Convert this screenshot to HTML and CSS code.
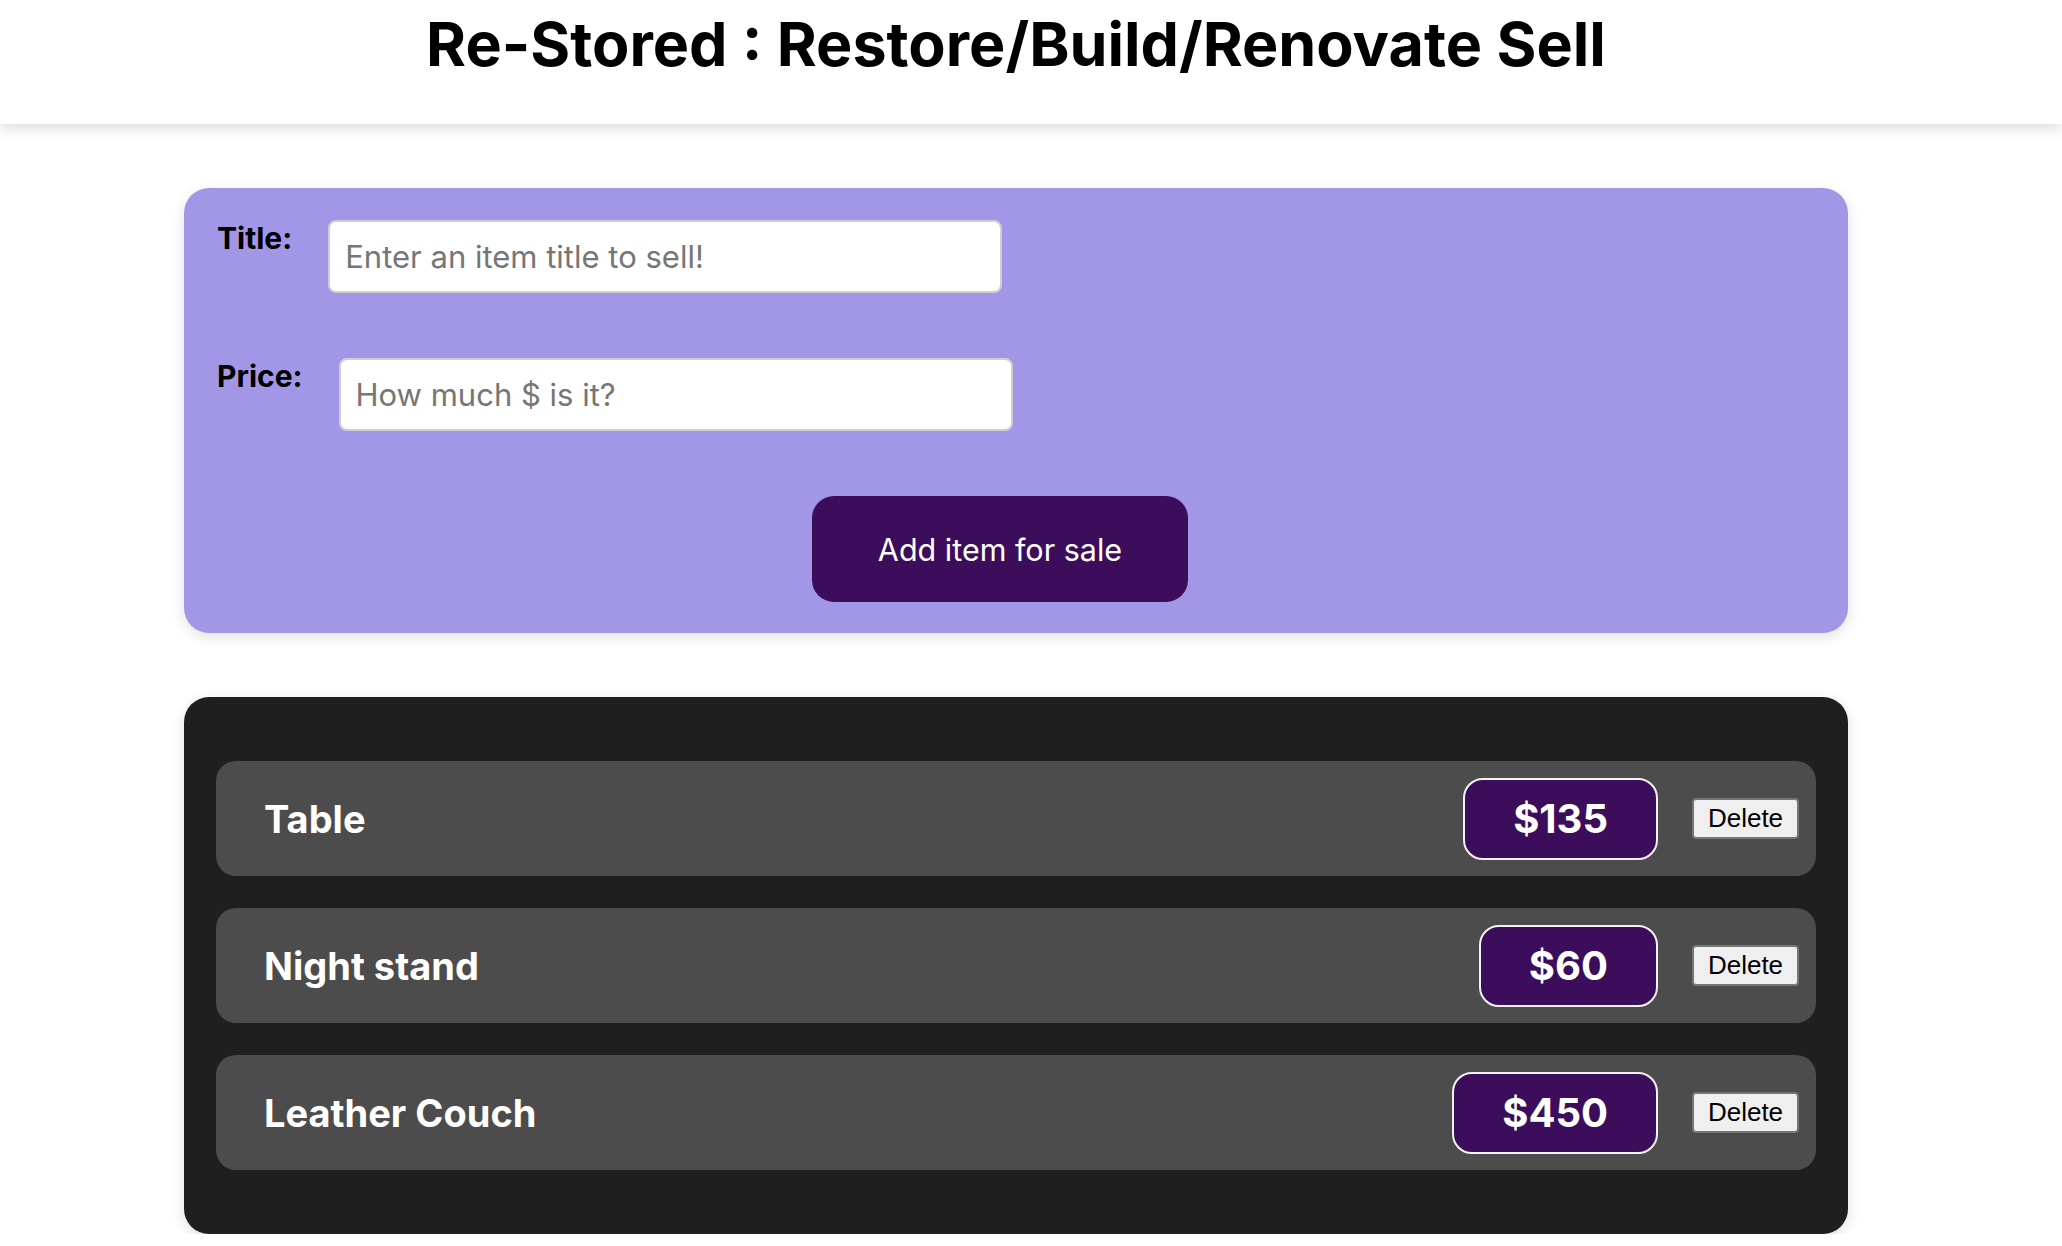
FILE: index.html
```html
<!DOCTYPE html>
<html lang="en">
<head>
<meta charset="utf-8">
<title>Re-Stored</title>
<link rel="stylesheet" href="styles.css">
</head>
<body>
<header class="site-header">
  <h1 class="site-title">Re-Stored : Restore/Build/Renovate Sell</h1>
</header>
<main class="page">
  <form class="sell-form">
    <div class="form-row">
      <label class="form-label" for="title">Title:</label>
      <input class="form-input" id="title" type="text" placeholder="Enter an item title to sell!">
    </div>
    <div class="form-row">
      <label class="form-label" for="price">Price:</label>
      <input class="form-input" id="price" type="text" placeholder="How much $ is it?">
    </div>
    <button class="add-btn" type="button">Add item for sale</button>
  </form>

  <section class="item-list">
    <div class="item-row">
      <span class="item-name">Table</span>
      <span class="item-price">$135</span>
      <button class="delete-btn" type="button">Delete</button>
    </div>
    <div class="item-row">
      <span class="item-name">Night stand</span>
      <span class="item-price">$60</span>
      <button class="delete-btn" type="button">Delete</button>
    </div>
    <div class="item-row">
      <span class="item-name">Leather Couch</span>
      <span class="item-price">$450</span>
      <button class="delete-btn" type="button">Delete</button>
    </div>
  </section>
</main>
</body>
</html>
```

FILE: styles.css
```css
* { box-sizing: border-box; }

html, body {
  margin: 0;
  padding: 0;
  background: #ffffff;
  font-family: Inter, "Noto Sans", "Liberation Sans", sans-serif;
}

.site-header {
  height: 124px;
  padding: 8px 30px 0 0;
  background: #ffffff;
  box-shadow: 0 5px 12px rgba(0, 0, 0, 0.13);
  position: relative;
  z-index: 1;
}

.site-title {
  margin: 0;
  text-align: center;
  font-size: 61px;
  font-weight: 700;
  line-height: 1.21;
  color: #000;
}

.page {
  width: 1664px;
  margin-left: 184px;
  padding-top: 64px;
  display: flex;
  flex-direction: column;
  gap: 64px;
}

.sell-form {
  background: #a297e6;
  border-radius: 25px;
  padding: 32px 35px 31px 33px;
  box-shadow: 0 4px 14px rgba(0, 0, 0, 0.12);
  display: flex;
  flex-direction: column;
  gap: 65px;
}

.form-row {
  display: flex;
  align-items: flex-start;
}

.form-label {
  font-size: 30px;
  font-weight: 700;
  line-height: 1.21;
  color: #000;
  margin-right: 36px;
}

.form-input {
  width: 674px;
  height: 73px;
  border: 2px solid #cfcfcf;
  border-radius: 8px;
  padding: 0 15px;
  font-family: Inter, "Noto Sans", sans-serif;
  font-size: 31px;
  color: #000;
  background: #fff;
  outline: none;
}

.form-input::placeholder {
  color: #767676;
}

.add-btn {
  align-self: flex-start;
  margin-left: 595px;
  width: 376px;
  height: 106px;
  border: none;
  border-radius: 22px;
  background: #3c0d5a;
  color: #fff;
  font-family: Inter, "Noto Sans", sans-serif;
  font-size: 30.5px;
  font-weight: 400;
}

.item-list {
  background: #1f1f1f;
  border-radius: 25px;
  padding: 64px 32px;
  box-shadow: 0 4px 14px rgba(0, 0, 0, 0.12);
  display: flex;
  flex-direction: column;
  gap: 32px;
}

.item-row {
  height: 115px;
  background: #4c4c4c;
  border-radius: 20px;
  padding: 0 17px 0 48px;
  display: flex;
  align-items: center;
}

.item-name {
  flex: 1;
  color: #fff;
  font-size: 38px;
  font-weight: 700;
}

.item-price {
  height: 82px;
  padding: 0 48px;
  display: flex;
  align-items: center;
  background: #3c0d5a;
  border: 2px solid #f2f2f2;
  border-radius: 20px;
  color: #fff;
  font-size: 40px;
  font-weight: 700;
}

.delete-btn {
  margin-left: 34px;
  width: 107px;
  height: 41px;
  padding: 0;
  background: #efefef;
  border: 2px solid #767676;
  border-radius: 4px;
  font-family: "Liberation Sans", Arial, sans-serif;
  font-size: 26px;
  color: #000;
}
```
